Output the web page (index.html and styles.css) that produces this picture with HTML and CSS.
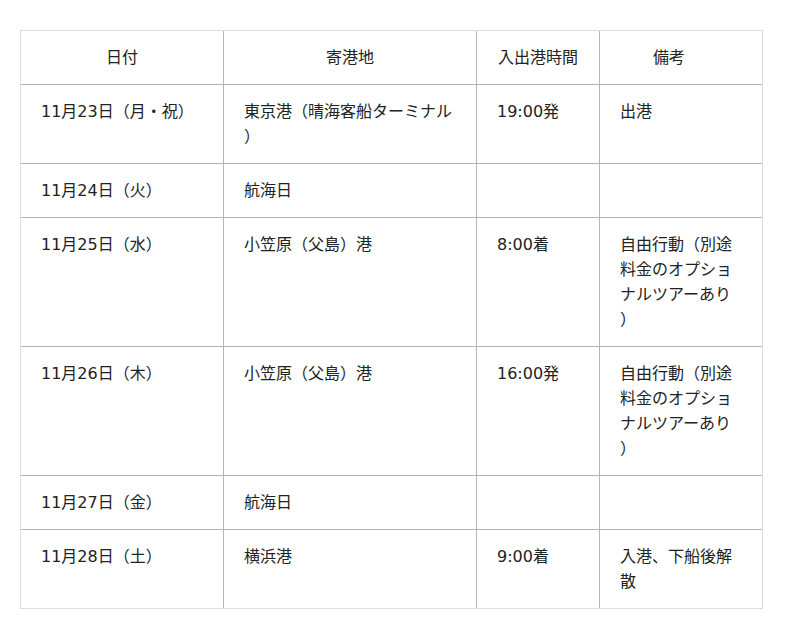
FILE: index.html
```html
<!DOCTYPE html>
<html lang="ja">
<head>
<meta charset="utf-8">
<link rel="stylesheet" href="styles.css">
</head>
<body>
<table class="schedule">
  <colgroup>
    <col class="c-date">
    <col class="c-port">
    <col class="c-time">
    <col class="c-note">
  </colgroup>
  <thead>
    <tr><th>日付</th><th>寄港地</th><th>入出港時間</th><th class="note-head">備考</th></tr>
  </thead>
  <tbody>
    <tr><td>11月23日（月・祝）</td><td>東京港（晴海客船ターミナル）</td><td>19:00発</td><td>出港</td></tr>
    <tr><td>11月24日（火）</td><td>航海日</td><td></td><td></td></tr>
    <tr><td>11月25日（水）</td><td>小笠原（父島）港</td><td>8:00着</td><td>自由行動（別途料金のオプショナルツアーあり）</td></tr>
    <tr><td>11月26日（木）</td><td>小笠原（父島）港</td><td>16:00発</td><td>自由行動（別途料金のオプショナルツアーあり）</td></tr>
    <tr><td>11月27日（金）</td><td>航海日</td><td></td><td></td></tr>
    <tr><td>11月28日（土）</td><td>横浜港</td><td>9:00着</td><td>入港、下船後解散</td></tr>
  </tbody>
</table>
</body>
</html>
```
FILE: styles.css
```css
html, body {
  margin: 0;
  background: #fff;
}
body {
  padding: 30px 20px;
  font-family: "DejaVu Sans", "Noto Sans CJK JP", sans-serif;
  font-size: 16px;
  line-height: 25px;
  color: #222;
}
.schedule {
  table-layout: fixed;
  width: 743px;
  border-collapse: separate;
  border-spacing: 0;
  border: 1px solid #dcdcdc;
}
.c-date { width: 203px; }
.c-port { width: 253px; }
.c-time { width: 123px; }
.c-note { width: 162px; }
.schedule th,
.schedule td {
  padding: 14px 20px;
  border-right: 1px solid #b4b4b4;
  border-bottom: 1px solid #b4b4b4;
  vertical-align: top;
  text-align: left;
  font-weight: normal;
  line-break: anywhere;
  word-break: break-all;
  text-spacing-trim: space-all;
}
.schedule th {
  text-align: center;
}
.schedule th.note-head {
  padding-right: 44px;
}
.schedule tr > :last-child {
  border-right: none;
}
.schedule tbody tr:last-child td {
  border-bottom: none;
}
```
